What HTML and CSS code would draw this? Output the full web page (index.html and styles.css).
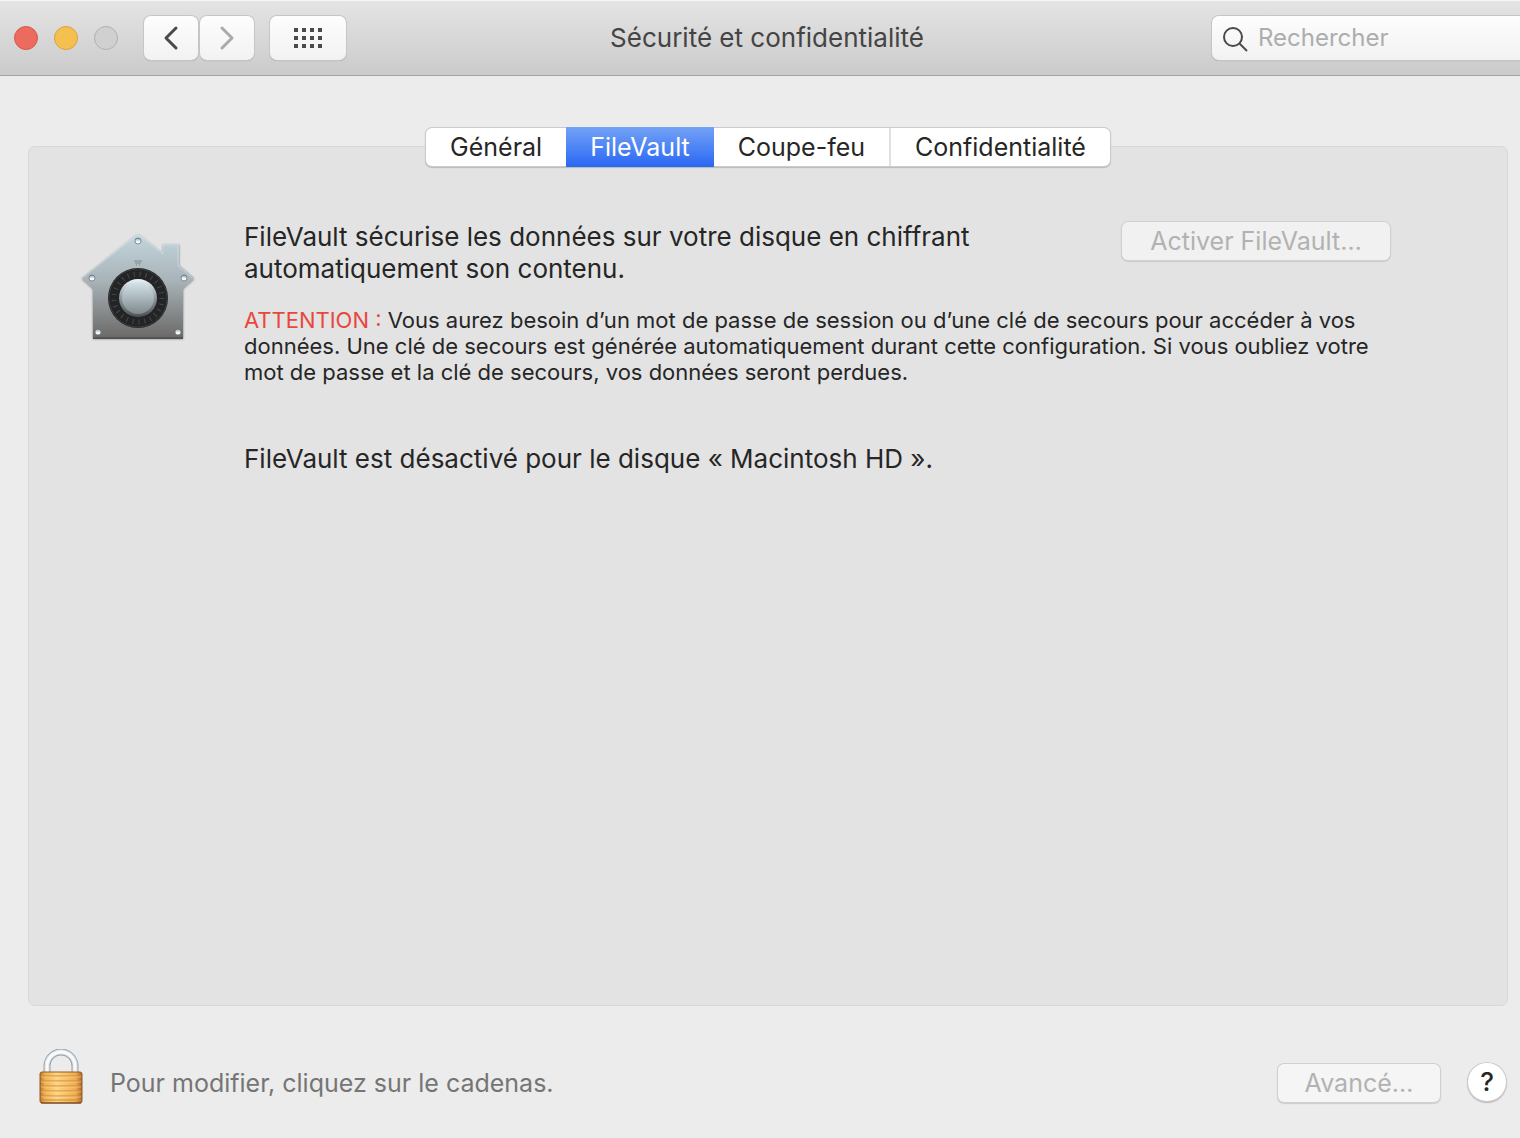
FILE: index.html
```html
<!DOCTYPE html>
<html lang="fr">
<head>
    <meta charset="UTF-8">
    <meta name="viewport" content="width=device-width, initial-scale=1.0">
    <title>Sécurité et confidentialité</title>
    <link rel="stylesheet" href="styles.css">
</head>
<body>
    <header class="toolbar">
        <div class="toolbar-left">
            <div class="lights">
                <button class="light light-close" aria-label="Fermer"></button>
                <button class="light light-min" aria-label="Réduire"></button>
                <button class="light light-zoom" aria-label="Agrandir" disabled></button>
            </div>
            <div class="nav-buttons">
                <button class="tool-btn" aria-label="Précédent">
                    <svg width="20" height="28" viewBox="0 0 20 28"><path d="M15 4 5 14l10 10" fill="none" stroke="#4a4a4a" stroke-width="3" stroke-linecap="round" stroke-linejoin="round"/></svg>
                </button>
                <button class="tool-btn" aria-label="Suivant" disabled>
                    <svg width="20" height="28" viewBox="0 0 20 28"><path d="M5 4l10 10L5 24" fill="none" stroke="#aaa" stroke-width="3" stroke-linecap="round" stroke-linejoin="round"/></svg>
                </button>
            </div>
            <button class="tool-btn tool-btn-grid" aria-label="Tout afficher">
                <svg width="28" height="20" viewBox="0 0 28 20" fill="#4a4a4a">
                    <path d="M0 0h4v4H0zM8 0h4v4H8zM16 0h4v4h-4zM24 0h4v4h-4zM0 8h4v4H0zM8 8h4v4H8zM16 8h4v4h-4zM24 8h4v4h-4zM0 16h4v4H0zM8 16h4v4H8zM16 16h4v4h-4zM24 16h4v4h-4z"/>
                </svg>
            </button>
        </div>
        <h1 class="title">Sécurité et confidentialité</h1>
        <label class="search">
            <svg width="28" height="28" viewBox="0 0 28 28" fill="none" stroke="#4a4a4a" stroke-width="2"><circle cx="11" cy="13" r="9"/><path d="M17 19l8 8"/></svg>
            <input type="search" placeholder="Rechercher" aria-label="Rechercher">
        </label>
    </header>

    <main class="content">
        <nav class="tabs">
            <button class="tab">Général</button>
            <button class="tab tab-active">FileVault</button>
            <button class="tab">Coupe-feu</button>
            <button class="tab tab-split">Confidentialité</button>
        </nav>

        <section class="panel">
            <svg class="vault-icon" width="124" height="124" viewBox="0 0 124 124">
                <defs>
                    <linearGradient id="house" x1="0" y1="0" x2="0" y2="1">
                        <stop offset="0" stop-color="#c3d6de"/>
                        <stop offset=".45" stop-color="#a8b3b8"/>
                        <stop offset="1" stop-color="#6b6967"/>
                    </linearGradient>
                    <linearGradient id="rim" x1="0" y1="0" x2="0" y2="1">
                        <stop offset="0" stop-color="#eef6f8"/>
                        <stop offset=".5" stop-color="#8c979c"/>
                        <stop offset="1" stop-color="#4e5153"/>
                    </linearGradient>
                    <linearGradient id="knob" x1="0" y1="0" x2="0" y2="1">
                        <stop offset="0" stop-color="#d4e4ea"/>
                        <stop offset="1" stop-color="#80898d"/>
                    </linearGradient>
                    <linearGradient id="screw" x1="0" y1="0" x2="0" y2="1">
                        <stop offset="0" stop-color="#8d9aa0"/>
                        <stop offset=".6" stop-color="#f4f8fa"/>
                    </linearGradient>
                    <filter id="shade" x="-10%" y="-10%" width="120%" height="125%">
                        <feDropShadow dx="0" dy="1" stdDeviation="1" flood-color="#000" flood-opacity=".5"/>
                    </filter>
                </defs>
                <path d="M61 6Q63 4 65 6L88 24V15h16v21l14 12q1 1 0 2l-10 9v50H18V59L8 50q-1-1 0-2z" fill="url(#house)" filter="url(#shade)"/>
                <path d="M9 48L61 7Q63 5 65 7L88 25V16h15v21l14 12" fill="none" stroke="#dce8ed" stroke-opacity=".5"/>
                <path d="M18 109h90" stroke="#565453" stroke-width="2"/>
                <path d="M59 32h8M60 34h6M61 36h1M64 36h1" stroke="#7f8b90" stroke-width="1"/>
                <circle cx="63" cy="69" r="30" fill="#232425"/>
                <circle cx="63" cy="69" r="29" fill="none" stroke="#3b3d3e"/>
                <circle cx="63" cy="69" r="24" fill="none" stroke="#46494b" stroke-width="5" stroke-dasharray="1 5"/>
                <circle cx="63" cy="69" r="19" fill="url(#rim)"/>
                <circle cx="63" cy="69" r="16" fill="url(#knob)"/>
                <g fill="url(#screw)" stroke="#5f6c72" stroke-opacity=".7">
                    <circle cx="63" cy="12" r="3"/>
                    <circle cx="17" cy="49" r="3"/>
                    <circle cx="109" cy="49" r="3"/>
                    <circle cx="23" cy="103" r="3"/>
                    <circle cx="103" cy="103" r="3"/>
                </g>
            </svg>

            <div class="panel-body">
                <div class="intro">
                    <p class="lead">FileVault sécurise les données sur votre disque en chiffrant automatiquement son contenu.</p>
                    <button class="btn btn-activate" disabled>Activer FileVault…</button>
                </div>
                <p class="warning"><strong>ATTENTION :</strong> Vous aurez besoin d’un mot de passe de session ou d’une clé de secours pour accéder à vos données. Une clé de secours est générée automatiquement durant cette configuration. Si vous oubliez votre mot de passe et la clé de secours, vos données seront perdues.</p>
                <p class="status">FileVault est désactivé pour le disque « Macintosh HD ».</p>
            </div>
        </section>
    </main>

    <footer class="footer">
        <button class="lock" aria-label="Cadenas">
            <svg width="46" height="68" viewBox="0 0 46 68">
                <defs>
                    <linearGradient id="gold" x1="0" y1="0" x2="1" y2="0">
                        <stop offset="0" stop-color="#b9732a"/>
                        <stop offset=".12" stop-color="#f0b050"/>
                        <stop offset=".4" stop-color="#ffd582"/>
                        <stop offset=".85" stop-color="#f0ac4c"/>
                        <stop offset="1" stop-color="#a96423"/>
                    </linearGradient>
                </defs>
                <path d="M9 25V17a14 14 0 0 1 28 0v8" fill="none" stroke="#9aa2a9" stroke-width="7"/>
                <path d="M9 25V17a14 14 0 0 1 28 0v8" fill="none" stroke="#d8dfe6" stroke-width="5"/>
                <path d="M9 25V17a14 14 0 0 1 28 0v8" fill="none" stroke="#f8fafc" stroke-width="3"/>
                <rect x="2" y="23" width="42" height="31" rx="2" fill="url(#gold)"/>
                <path d="M2 27h42M2 32h42M2 37h42M2 42h42M2 47h42M2 51h42" stroke="#c98a3a" stroke-width="1"/>
                <path d="M3 28h40M3 33h40M3 38h40M3 43h40M3 48h40" stroke="#ffe0a0" stroke-width="1" opacity=".5"/>
                <rect x="2" y="23" width="42" height="31" rx="2" fill="none" stroke="#925b28" stroke-width="1"/>
                <path d="M3 54h40" stroke="#6e3e1b" stroke-width="1"/>
            </svg>
        </button>
        <p class="footer-text">Pour modifier, cliquez sur le cadenas.</p>
        <button class="btn btn-advanced" disabled>Avancé…</button>
        <button class="help" aria-label="Aide">?</button>
    </footer>
</body>
</html>
```

FILE: styles.css
```css
* {
    box-sizing: border-box;
}
body {
    margin: 0;
    min-height: 100vh;
    display: flex;
    flex-direction: column;
    background: #ececec;
    color: #262626;
    font-family: Inter, "Liberation Sans", sans-serif;
    font-size: 26px;
    line-height: 32px;
}
h1, p {
    margin: 0;
}
button, input {
    font: inherit;
    color: inherit;
    padding: 0;
    border: 0;
}

/* toolbar */
.toolbar {
    display: grid;
    grid-template-columns: 1fr auto 1fr;
    align-items: center;
    height: 76px;
    padding-left: 14px;
    background: linear-gradient(#e4e4e4, #cbcbcb);
    border-top: 1px solid #f6f6f6;
    border-bottom: 1px solid #a3a3a3;
}
.toolbar-left {
    display: flex;
    align-items: center;
}
.lights {
    display: flex;
    gap: 16px;
    margin-right: 26px;
}
.light {
    width: 24px;
    height: 24px;
    border: 1px solid #b9b9b9;
    border-radius: 50%;
}
.light-close {
    background: #ed6a5e;
    border-color: #d6584d;
}
.light-min {
    background: #f5c04f;
    border-color: #d9a33c;
}
.light-zoom {
    background: #d0d0d0;
    border-color: #b0b0b0;
}
.nav-buttons {
    display: flex;
    gap: 2px;
    margin-right: 16px;
}
.tool-btn {
    display: flex;
    align-items: center;
    justify-content: center;
    width: 54px;
    height: 44px;
    border-radius: 7px;
    background: linear-gradient(#fdfdfd, #f2f2f2);
    box-shadow: 0 0 0 1px #c6c6c6, 0 1px 1px #8f8f8f;
}
.tool-btn-grid {
    width: 76px;
}
.title {
    color: #444;
    font-size: 26px;
    font-weight: 400;
}
.search {
    display: flex;
    align-items: center;
    justify-self: end;
    width: 308px;
    height: 44px;
    padding-left: 10px;
    gap: 8px;
    border-radius: 7px 0 0 7px;
    background: linear-gradient(#fdfdfd, #f2f2f2);
    box-shadow: 0 0 0 1px #c6c6c6, 0 1px 1px #8f8f8f;
}
.search input {
    flex: 1;
    min-width: 0;
    background: none;
    font-size: 24px;
    outline: none;
}
.search input::placeholder {
    color: #adadad;
}

/* tabs and panel */
.content {
    flex: 1;
    display: flex;
    flex-direction: column;
    padding: 52px 12px 0 28px;
}
.tabs {
    display: flex;
    align-self: center;
    z-index: 1;
    height: 38px;
    margin-bottom: -20px;
    border-radius: 6px;
    background: #fff;
    box-shadow: 0 0 0 1px #cbcbcb, 0 1px 1px 1px #b8b8b8;
}
.tab {
    padding: 0 24px;
    background: none;
    font-size: 25px;
}
.tab-active {
    margin: -1px 0;
    color: #fff;
    background: linear-gradient(#74a2f6, #2967f4);
}
.tab-split {
    border-left: 2px solid #e0e0e0;
}
.panel {
    flex: 1;
    display: flex;
    align-items: flex-start;
    padding: 74px 117px 0 46px;
    gap: 45px;
    border: 1px solid #d8d8d8;
    border-radius: 7px;
    background: #e3e3e3;
}
.vault-icon {
    flex: none;
    margin-top: 8px;
}
.panel-body {
    flex: 1;
}
.intro {
    display: flex;
    justify-content: space-between;
    align-items: flex-start;
}
.lead {
    width: 740px;
}
.warning {
    margin: 22px 0 58px;
    font-size: 22px;
    line-height: 26px;
}
.warning strong {
    font-weight: 400;
    color: #e8483c;
}
.btn {
    height: 38px;
    border-radius: 6px;
    background: #f1f1f1;
    color: #b2b2b2;
    font-size: 25px;
    box-shadow: 0 0 0 1px #d0d0d0, 0 1px 1px 1px #cdcdcd;
}
.btn-activate {
    width: 268px;
    margin-top: 1px;
}

/* footer */
.footer {
    display: flex;
    align-items: center;
    height: 132px;
    padding: 22px 14px 0 38px;
}
.lock {
    display: flex;
    background: none;
}
.footer-text {
    flex: 1;
    margin-left: 26px;
    color: #757575;
    font-size: 25px;
}
.btn-advanced {
    width: 162px;
    background: #f5f5f5;
}
.help {
    width: 38px;
    height: 38px;
    margin: 0 0 3px 28px;
    border-radius: 50%;
    background: #fff;
    font-weight: 500;
    box-shadow: 0 0 0 1px #cdcdcd, 0 1px 1px 1px #b8b8b8;
}
```
